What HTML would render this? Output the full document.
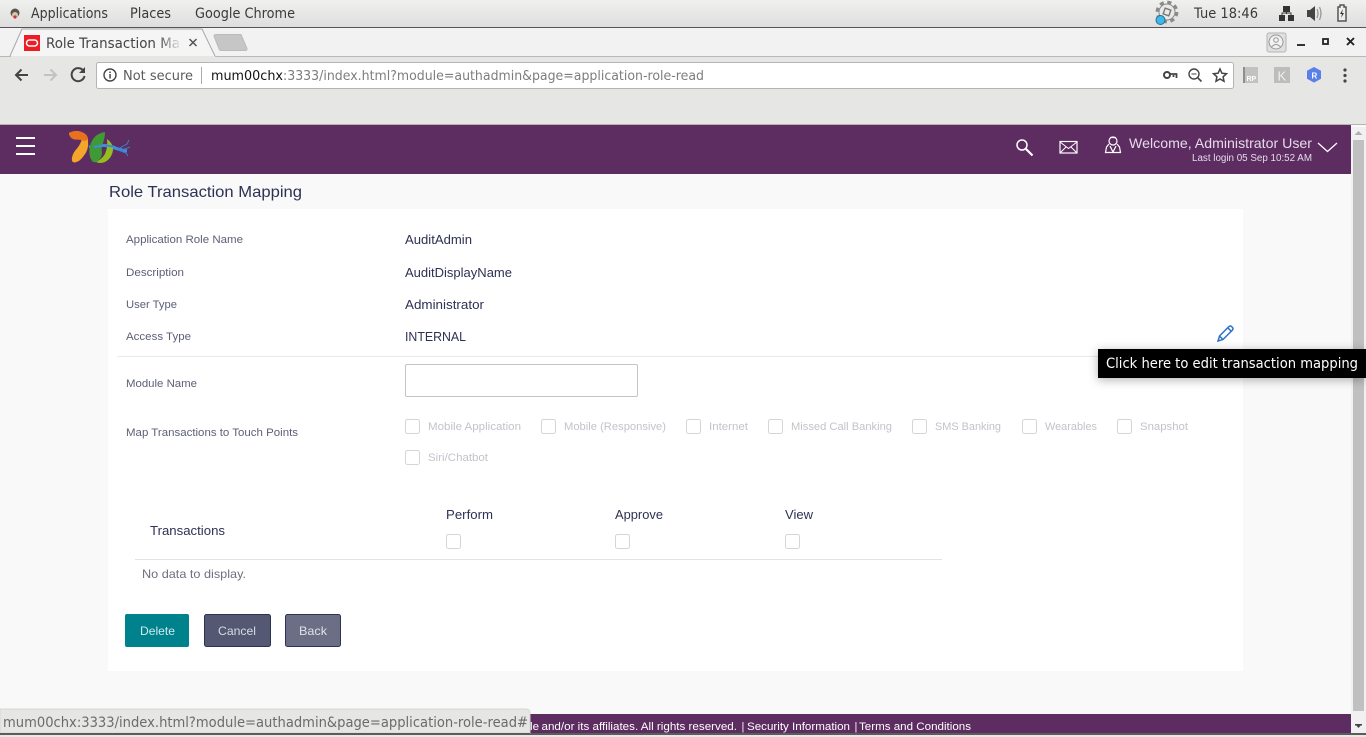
<!DOCTYPE html>
<html><head><meta charset="utf-8"><title>Role Transaction Mapping</title>
<style>
html,body{margin:0;padding:0;width:1366px;height:737px;overflow:hidden;background:#f9f9f9}
svg{display:block;position:absolute;left:0;top:0}
text{font-family:"Liberation Sans",sans-serif;white-space:pre}
.ui{font-family:"DejaVu Sans",sans-serif}
</style></head><body>
<svg width="1366" height="737" viewBox="0 0 1366 737" xmlns="http://www.w3.org/2000/svg">
<defs>
<linearGradient id="top" x1="0" y1="0" x2="0" y2="1"><stop offset="0" stop-color="#f0f0ee"/><stop offset="1" stop-color="#dedede"/></linearGradient>
<linearGradient id="fade" x1="0" y1="0" x2="1" y2="0"><stop offset="0" stop-color="#f5f5f5" stop-opacity="0"/><stop offset="1" stop-color="#f5f5f5"/></linearGradient>
<filter id="sh" x="-5%" y="-30%" width="110%" height="170%"><feDropShadow dx="0" dy="2" stdDeviation="5" flood-color="#000" flood-opacity=".3"/></filter>
</defs>
<rect width="1366" height="737" fill="#f9f9f9"/>
<!-- system bar -->
<rect width="1366" height="27" fill="url(#top)"/>
<rect y="27" width="1366" height="1" fill="#555"/>
<circle cx="15" cy="13" r="4.500" fill="#555"/><circle cx="15" cy="15" r="3" fill="#d9c7a8"/><circle cx="15" cy="17" r="1.600" fill="#c33"/>
<text class="ui" x="31" y="18" font-size="14" fill="#3a3a3a" textLength="77" lengthAdjust="spacingAndGlyphs">Applications</text>
<text class="ui" x="130" y="18" font-size="14" fill="#3a3a3a" textLength="41" lengthAdjust="spacingAndGlyphs">Places</text>
<text class="ui" x="195" y="18" font-size="14" fill="#3a3a3a" textLength="100" lengthAdjust="spacingAndGlyphs">Google Chrome</text>
<!-- tray -->
<circle cx="1167" cy="12" r="9.500" fill="none" stroke="#8a8a8a" stroke-width="3.800" stroke-dasharray="4 3.460"/>
<circle cx="1167" cy="12" r="8" fill="#e9e9e7" stroke="#8a8a8a" stroke-width="1"/>
<rect x="1164" y="9" width="6" height="6" fill="none" stroke="#777" stroke-width="1.400" transform="rotate(20 1167 12)"/>
<circle cx="1160.500" cy="20" r="4.500" fill="#3db8e8" stroke="#2a6f8f"/>
<text class="ui" x="1194" y="18" font-size="14" fill="#3a3a3a" textLength="64" lengthAdjust="spacingAndGlyphs">Tue 18:46</text>
<path d="M1283 6h7v6h-7zM1279 15h6v6h-6zM1288 15h6v6h-6z" fill="#333"/><path d="M1286.500 12v2M1282 15v-2h9v2" fill="none" stroke="#333"/>
<path d="M1307 10h3l5-4v15l-5-4h-3z" fill="#444"/><path d="M1317 9q2 4 0 9M1319.500 7q3 6 0 13" fill="none" stroke="#999" stroke-width="1.300"/>
<path d="M1338 7h2v-2h4v2h2v14h-8z" fill="#eee" stroke="#555" stroke-width="1.500"/><path d="M1343 9l-3 5h2l-1 4 3-5h-2z" fill="#333"/>
<!-- tab strip -->
<rect y="28" width="1366" height="28" fill="#f2f2f2"/>
<rect y="56" width="1366" height="1" fill="#b9b9b9"/>
<path d="M10 56L22 29H202L215 56" fill="#f5f5f5" stroke="#a8a8a8"/>
<rect x="11" y="56" width="204" height="1" fill="#e6e6e4"/>
<path d="M214 36q0-1.500 2-1.500h25l6 14q.5 2-2 2h-24q-1.500 0-2-1.500z" fill="#c6c6c6" stroke="#bbb"/>
<rect x="24" y="35" width="16" height="16" fill="#ee1c25"/><rect x="26.500" y="40" width="11" height="6" rx="3" fill="none" stroke="#fff" stroke-width="1.500"/>
<text class="ui" x="46" y="48" font-size="14.500" fill="#444" textLength="134" lengthAdjust="spacingAndGlyphs">Role Transaction Ma</text>
<rect x="158" y="32" width="24" height="20" fill="url(#fade)"/>
<path d="M189.500 39l7 7M196.500 39l-7 7" stroke="#555" stroke-width="1.500"/>
<rect x="1267" y="33" width="19" height="19" rx="2" fill="#e0e0e0" stroke="#b4b4b4"/>
<circle cx="1276" cy="42" r="7" fill="#f2f2f2" stroke="#999"/><circle cx="1276" cy="40" r="2.300" fill="none" stroke="#999"/><path d="M1271.500 47q4.500-5 9 0" fill="none" stroke="#999"/>
<rect x="1297" y="44" width="8" height="2" fill="#333"/>
<rect x="1323" y="39" width="5" height="5" fill="none" stroke="#222" stroke-width="1.800"/>
<path d="M1347 38l7 7M1354 38l-7 7" stroke="#222" stroke-width="1.900"/>
<!-- toolbar -->
<rect y="57" width="1366" height="67" fill="#e6e6e4"/>
<rect y="124" width="1366" height="1" fill="#b5b5b3"/>
<path d="M28 75H16M21.500 69.500L16 75l5.500 5.500" fill="none" stroke="#444" stroke-width="2"/>
<path d="M44 75H56M50.500 69.500L56 75l-5.500 5.500" fill="none" stroke="#c2c2c2" stroke-width="2"/>
<path d="M83.500 71a6.500 6.500 0 1 0 1 5" fill="none" stroke="#444" stroke-width="2"/><path d="M85 67v6h-6z" fill="#444"/>
<rect x="96.500" y="62.500" width="1137" height="26" rx="2" fill="#fff" stroke="#b5b5b5"/>
<circle cx="110" cy="75" r="6" fill="none" stroke="#444" stroke-width="1.400"/><rect x="109.300" y="74" width="1.500" height="4.500" fill="#444"/><rect x="109.300" y="71.500" width="1.500" height="1.500" fill="#444"/>
<text class="ui" x="123" y="80" font-size="13.500" fill="#5a5a5a" textLength="70" lengthAdjust="spacingAndGlyphs">Not secure</text>
<rect x="201" y="67" width="1" height="17" fill="#aaa"/>
<text class="ui" x="211" y="80" font-size="13.500" fill="#111" textLength="72" lengthAdjust="spacingAndGlyphs">mum00chx</text>
<text class="ui" x="283" y="80" font-size="13.500" fill="#7d7d7d" textLength="421" lengthAdjust="spacingAndGlyphs">:3333/index.html?module=authadmin&amp;page=application-role-read</text>
<circle cx="1167" cy="75" r="3" fill="none" stroke="#444" stroke-width="2"/><path d="M1170 74h6.500v4M1173.500 75v2" fill="none" stroke="#444" stroke-width="1.800"/>
<circle cx="1194" cy="74" r="5" fill="none" stroke="#444" stroke-width="1.400"/><path d="M1198 78l3.500 3.500" stroke="#444" stroke-width="1.600"/><path d="M1191.500 74h5" stroke="#444"/>
<path d="M1220 69l1.900 4.200 4.600.5-3.400 3.100.9 4.500-4-2.300-4 2.300.9-4.500-3.400-3.100 4.600-.5z" fill="none" stroke="#444" stroke-width="1.500"/>
<rect x="1243" y="67" width="15" height="16" fill="#c2c2c2"/><rect x="1243" y="67" width="2" height="16" fill="#8f8f8f"/>
<text x="1246.500" y="81" font-size="7" font-weight="bold" fill="#fff">RP</text>
<rect x="1274" y="67" width="16" height="16" fill="#bdbdbd"/>
<text x="1277.500" y="80.500" font-size="13" fill="#f0f0f0">K</text>
<path d="M1314 67l7 3.800v8l-7 3.800-7-3.800v-8z" fill="#5b7fe8"/>
<text x="1311.500" y="78.500" font-size="8" font-weight="bold" fill="#fff">R</text>
<circle cx="1345" cy="70" r="1.600" fill="#444"/><circle cx="1345" cy="75.500" r="1.600" fill="#444"/><circle cx="1345" cy="81" r="1.600" fill="#444"/>
<!-- app header -->
<rect y="125" width="1351" height="49" fill="#5d2c60"/>
<rect x="16" y="137" width="19" height="2" fill="#fff"/><rect x="16" y="145" width="19" height="2" fill="#fff"/><rect x="16" y="153" width="19" height="2" fill="#fff"/>
<!-- logo -->
<path d="M89 147q10-3 20-1 10 4 18 5" fill="none" stroke="#3d8fd8" stroke-width="3"/>
<path d="M105 132q-12 2-15 14-2 9 2 15 2 2 4 1 6-3 6-10-1-4 1-9 2-6 2-11z" fill="#3f9a35"/>
<path d="M107 139q6 4 6 11-1 8-8 12-5 2-9 0 6-3 9-8 3-7 2-15z" fill="#92bf1f"/>
<path d="M94 147q10-2.500 19-.5 6 3 14 4" fill="none" stroke="#3d8fd8" stroke-width="2.200"/>
<path d="M69 133q6-3 11-1.500 8 2 8 9 1 9-4 15-4 6-9 7-4 0-3-5 1-5 5-9 4-5 5-10-3-1-8-1-5-1-5-4z" fill="#f5a52a"/>
<path d="M69 133q6-3 11-1.500 7 2 8 7-1 3-5 2-3-1-9-1-5-2-5-6.500z" fill="#e8701f"/>
<path d="M118 149l9-5 2-4M118 150l8 3 2 3M122 150l8-3" fill="none" stroke="#4a78c8" stroke-width="1"/>
<!-- header right -->
<g fill="none" stroke="#fff"><circle cx="1022" cy="145" r="5" stroke-width="1.500"/><path d="M1026 149l6.500 6.500" stroke-width="2.200"/>
<rect x="1060" y="141.500" width="17" height="11.500" stroke-width="1.200"/><path d="M1060 142l8.500 6.500 8.500-6.500M1060 153l6-6M1077 153l-6-6" stroke-width="1"/>
<circle cx="1113" cy="141" r="4" stroke-width="1.200"/><path d="M1110 137.500h6M1109 144l-2.500 3-1 5.500h15l-1-5.500-2.500-3M1110 146l3 6 3-6" stroke-width="1.200"/>
<path d="M1318 143l9.500 8.500 9.500-8.500" stroke-width="1.300"/></g>
<text x="1129" y="148" font-size="14" fill="#e4dcea" textLength="183" lengthAdjust="spacingAndGlyphs">Welcome, Administrator User</text>
<text x="1192" y="161" font-size="10" fill="#e4dcea" textLength="120" lengthAdjust="spacingAndGlyphs">Last login 05 Sep 10:52 AM</text>
<!-- scrollbar -->
<rect x="1351" y="127" width="15" height="607" fill="#f1f1f1"/>
<rect x="1353" y="140" width="11" height="571" fill="#c0c0c0"/>
<path d="M1358.500 131l4 4h-8z" fill="#b0b0b0"/>
<path d="M1355 724h7l-3.500 4z" fill="#444"/><rect x="1355" y="724" width="7" height="1.500" fill="#444"/>
<!-- content -->
<text x="109" y="197" font-size="16" fill="#2e3153" textLength="193" lengthAdjust="spacingAndGlyphs">Role Transaction Mapping</text>
<rect x="108" y="209" width="1135" height="462" fill="#fff"/>
<g font-size="11" fill="#5c5f78">
<text x="126" y="243" textLength="117" lengthAdjust="spacingAndGlyphs">Application Role Name</text>
<text x="126" y="276" textLength="58" lengthAdjust="spacingAndGlyphs">Description</text>
<text x="126" y="308" textLength="51" lengthAdjust="spacingAndGlyphs">User Type</text>
<text x="126" y="340" textLength="65" lengthAdjust="spacingAndGlyphs">Access Type</text>
<text x="126" y="387" textLength="71" lengthAdjust="spacingAndGlyphs">Module Name</text>
<text x="126" y="436" textLength="172" lengthAdjust="spacingAndGlyphs">Map Transactions to Touch Points</text>
</g>
<g font-size="12.500" fill="#2e3153">
<text x="405" y="244" textLength="67" lengthAdjust="spacingAndGlyphs">AuditAdmin</text>
<text x="405" y="277" textLength="107" lengthAdjust="spacingAndGlyphs">AuditDisplayName</text>
<text x="405" y="309" textLength="79" lengthAdjust="spacingAndGlyphs">Administrator</text>
<text x="405" y="341" textLength="61" lengthAdjust="spacingAndGlyphs">INTERNAL</text>
</g>
<rect x="117" y="356" width="1126" height="1" fill="#e9e9e9"/>
<rect x="405.500" y="364.500" width="232" height="32" rx="1.500" fill="#fff" stroke="#c4c4c4"/>
<!-- pencil -->
<path d="M1218 341l1.500-5 9.500-9.500q1.500-1 2.500 0l1 1q1 1 0 2.500l-9.500 9.500zM1227.500 327.500l4 4M1219.500 336l3.500 3.500" fill="none" stroke="#2f72c9" stroke-width="1.500"/>
<!-- touch points -->
<g fill="#fff" stroke="#d5d5d5">
<rect x="405.500" y="419.500" width="14" height="14" rx="2"/><rect x="541.500" y="419.500" width="14" height="14" rx="2"/><rect x="686.500" y="419.500" width="14" height="14" rx="2"/><rect x="768.500" y="419.500" width="14" height="14" rx="2"/><rect x="912.500" y="419.500" width="14" height="14" rx="2"/><rect x="1022.500" y="419.500" width="14" height="14" rx="2"/><rect x="1117.500" y="419.500" width="14" height="14" rx="2"/><rect x="405.500" y="450.500" width="14" height="14" rx="2"/>
<rect x="446.500" y="534.500" width="14" height="14" rx="2"/><rect x="615.500" y="534.500" width="14" height="14" rx="2"/><rect x="785.500" y="534.500" width="14" height="14" rx="2"/>
</g>
<g font-size="11" fill="#c2c3cb">
<text x="428" y="430" textLength="93" lengthAdjust="spacingAndGlyphs">Mobile Application</text>
<text x="564" y="430" textLength="102" lengthAdjust="spacingAndGlyphs">Mobile (Responsive)</text>
<text x="709" y="430" textLength="39" lengthAdjust="spacingAndGlyphs">Internet</text>
<text x="791" y="430" textLength="101" lengthAdjust="spacingAndGlyphs">Missed Call Banking</text>
<text x="935" y="430" textLength="66" lengthAdjust="spacingAndGlyphs">SMS Banking</text>
<text x="1045" y="430" textLength="52" lengthAdjust="spacingAndGlyphs">Wearables</text>
<text x="1140" y="430" textLength="48" lengthAdjust="spacingAndGlyphs">Snapshot</text>
<text x="428" y="461" textLength="60" lengthAdjust="spacingAndGlyphs">Siri/Chatbot</text>
</g>
<!-- table -->
<g font-size="12.500" fill="#2e3153">
<text x="150" y="535" textLength="75" lengthAdjust="spacingAndGlyphs">Transactions</text>
<text x="446" y="519" textLength="47" lengthAdjust="spacingAndGlyphs">Perform</text>
<text x="615" y="519" textLength="48" lengthAdjust="spacingAndGlyphs">Approve</text>
<text x="785" y="519" textLength="28" lengthAdjust="spacingAndGlyphs">View</text>
</g>
<rect x="135" y="559" width="807" height="1" fill="#e3e3e3"/>
<text x="142" y="578" font-size="12" fill="#6e7080" textLength="104" lengthAdjust="spacingAndGlyphs">No data to display.</text>
<!-- buttons -->
<rect x="125" y="614" width="64" height="33" rx="2" fill="#00828c"/>
<text x="140" y="635" font-size="12" fill="#cfe9ee" textLength="35" lengthAdjust="spacingAndGlyphs">Delete</text>
<rect x="204.500" y="614.500" width="66" height="32" rx="2" fill="#555872" stroke="#2e3153"/>
<text x="218" y="635" font-size="12" fill="#d8dae6" textLength="38" lengthAdjust="spacingAndGlyphs">Cancel</text>
<rect x="285.500" y="614.500" width="55" height="32" rx="2" fill="#6b6e84" stroke="#2e3153"/>
<text x="299" y="635" font-size="12" fill="#e0e1ea" textLength="28" lengthAdjust="spacingAndGlyphs">Back</text>
<!-- footer -->
<rect y="714" width="1351" height="20" fill="#5d2c60"/>
<rect y="733" width="1366" height="2" fill="#5c5c5c"/>
<rect y="735" width="1366" height="2" fill="#e8e8e8"/>
<g font-size="11" fill="#fff">
<text x="530" y="730" textLength="9" lengthAdjust="spacingAndGlyphs">le</text>
<text x="541.500" y="730" textLength="195.500" lengthAdjust="spacingAndGlyphs">and/or its affiliates. All rights reserved.</text>
<text x="741.500" y="730">|</text>
<text x="747" y="730" textLength="103" lengthAdjust="spacingAndGlyphs">Security Information</text>
<text x="854.500" y="730">|</text>
<text x="859" y="730" textLength="112" lengthAdjust="spacingAndGlyphs">Terms and Conditions</text>
</g>
<!-- status bubble -->
<path d="M0 709h525q5 0 5 4v20H0z" fill="#e6e6e4" stroke="#d6d6d4"/>
<rect y="733" width="530" height="2" fill="#5c5c5c"/>
<text class="ui" x="3" y="727" font-size="14" fill="#6b6b6b" textLength="525" lengthAdjust="spacingAndGlyphs">mum00chx:3333/index.html?module=authadmin&amp;page=application-role-read#</text>
<!-- tooltip -->
<rect x="1098" y="349" width="268" height="29" fill="#000" filter="url(#sh)"/>
<text class="ui" x="1106" y="368" font-size="14" fill="#fff" textLength="252" lengthAdjust="spacingAndGlyphs">Click here to edit transaction mapping</text>
</svg>
</body></html>
